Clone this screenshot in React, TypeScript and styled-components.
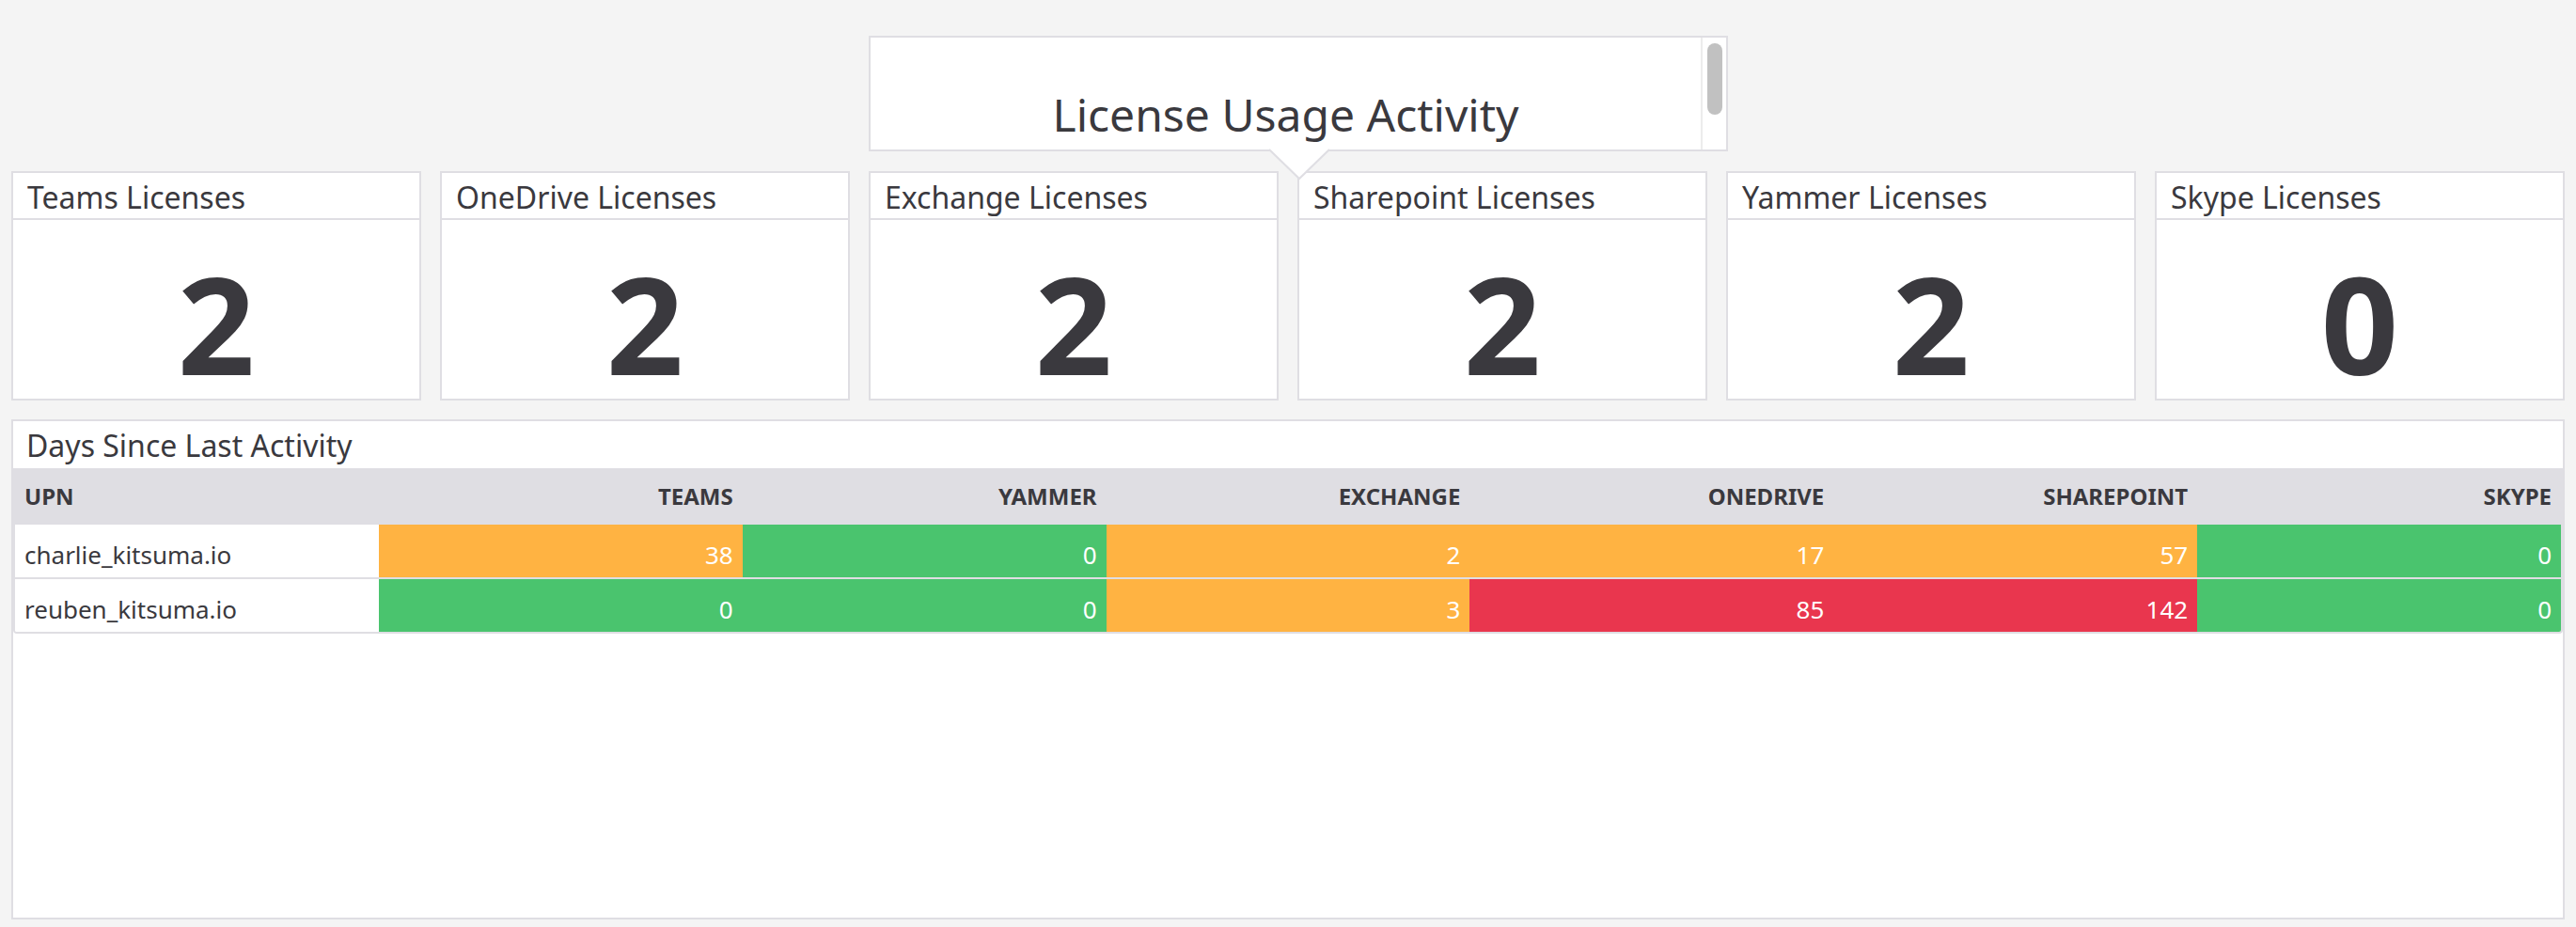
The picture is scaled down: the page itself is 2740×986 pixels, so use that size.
import React from "react";
import styled, { createGlobalStyle } from "styled-components";

const GlobalStyle = createGlobalStyle`
  html, body { margin: 0; padding: 0; background: #f4f4f4; }
  body { font-family: "Noto Sans", "Open Sans", sans-serif; color: #3a393e; }
  * { box-sizing: border-box; }
`;

const Page = styled.div`
  width: 2740px;
  height: 986px;
  padding: 38px 12px 0;
  display: flex;
  flex-direction: column;
  background: #f4f4f4;
`;

const TitleWrap = styled.div`
  position: relative;
  margin-left: 912px;
  width: 914px;
  height: 123px;
  z-index: 2;
`;

const TitleBox = styled.div`
  display: flex;
  height: 100%;
  background: #fff;
  border: 2px solid #dfdee3;
`;

const TitleContent = styled.div`
  flex: 1;
  display: flex;
  align-items: flex-end;
  justify-content: center;
  padding-bottom: 5px;
  font-size: 48px;
  line-height: 64px;
  white-space: nowrap;
`;

const ScrollTrack = styled.div`
  width: 27px;
  border-left: 2px solid #ececec;
  padding: 6px 0 0 5px;
`;

const ScrollThumb = styled.div`
  width: 16px;
  height: 76px;
  border-radius: 8px;
  background: #c1c1c1;
`;

const Pointer = styled.svg`
  position: absolute;
  left: 426px;
  top: 120px;
  width: 64px;
  height: 34px;
  overflow: visible;
  pointer-events: none;
`;

const CardGrid = styled.div`
  display: grid;
  grid-template-columns: repeat(6, 1fr);
  gap: 20px;
  margin-top: 21px;
`;

const Card = styled.div`
  height: 244px;
  background: #fff;
  border: 2px solid #dfdee3;
  display: flex;
  flex-direction: column;
`;

const CardHeader = styled.div`
  height: 50px;
  padding: 4px 0 0 15px;
  line-height: 44px;
  font-size: 32px;
  border-bottom: 2px solid #dfdee3;
  white-space: nowrap;
`;

const CardValue = styled.div`
  flex: 1;
  display: flex;
  align-items: center;
  justify-content: center;
  padding-top: 28px;
  font-family: "Open Sans", "Noto Sans", sans-serif;
  font-size: 144px;
  font-weight: 700;
  line-height: 1;
`;

const Panel = styled.div`
  margin-top: 20px;
  height: 532px;
  background: #fff;
  border: 2px solid #dfdee3;
  display: flex;
  flex-direction: column;
`;

const PanelTitle = styled.div`
  height: 50px;
  line-height: 50px;
  padding: 2px 0 0 14px;
  font-size: 32px;
  line-height: 48px;
`;

const TableFrame = styled.div`
  border: 2px solid #dfdee3;
  border-top: 0;
  border-radius: 0 0 4px 4px;
  overflow: hidden;
`;

const HeaderRow = styled.div`
  display: grid;
  grid-template-columns: repeat(7, 1fr);
  height: 60px;
  background: #dfdee3;
`;

const HeaderCell = styled.div<{ $left?: boolean }>`
  padding: 0 10px;
  font-size: 24px;
  font-weight: 700;
  line-height: 60px;
  text-align: ${(p) => (p.$left ? "left" : "right")};
  white-space: nowrap;
`;

const Row = styled.div`
  display: grid;
  grid-template-columns: repeat(7, 1fr);
  height: 56px;
  & + & {
    height: 58px;
    border-top: 2px solid #dfdee3;
  }
`;

const palette: Record<string, string> = {
  none: "#ffffff",
  green: "#4ac46e",
  orange: "#ffb342",
  red: "#e9364e",
};

const Cell = styled.div<{ $tone: string }>`
  padding: 8px 10px 0;
  font-size: 26px;
  line-height: 48px;
  white-space: nowrap;
  background: ${(p) => palette[p.$tone]};
  color: ${(p) => (p.$tone === "none" ? "#3a393e" : "#ffffff")};
  text-align: ${(p) => (p.$tone === "none" ? "left" : "right")};
`;

const cards = [
  { label: "Teams Licenses", value: 2 },
  { label: "OneDrive Licenses", value: 2 },
  { label: "Exchange Licenses", value: 2 },
  { label: "Sharepoint Licenses", value: 2 },
  { label: "Yammer Licenses", value: 2 },
  { label: "Skype Licenses", value: 0 },
];

const columns = ["UPN", "TEAMS", "YAMMER", "EXCHANGE", "ONEDRIVE", "SHAREPOINT", "SKYPE"];

const tone = (v: number) => (v === 0 ? "green" : v > 60 ? "red" : "orange");

const rows = [
  { upn: "charlie_kitsuma.io", values: [38, 0, 2, 17, 57, 0] },
  { upn: "reuben_kitsuma.io", values: [0, 0, 3, 85, 142, 0] },
];

export default function App() {
  return (
    <>
      <GlobalStyle />
      <Page>
        <TitleWrap>
          <TitleBox>
            <TitleContent>License Usage Activity</TitleContent>
            <ScrollTrack>
              <ScrollThumb />
            </ScrollTrack>
          </TitleBox>
          <Pointer viewBox="0 0 64 34">
            <polygon points="0,1 32,32 64,1" fill="#ffffff" stroke="none" />
            <polyline points="0,1 32,32 64,1" fill="none" stroke="#dfdee3" strokeWidth="2" />
          </Pointer>
        </TitleWrap>
        <CardGrid>
          {cards.map((c) => (
            <Card key={c.label}>
              <CardHeader>{c.label}</CardHeader>
              <CardValue>{c.value}</CardValue>
            </Card>
          ))}
        </CardGrid>
        <Panel>
          <PanelTitle>Days Since Last Activity</PanelTitle>
          <TableFrame>
            <HeaderRow>
              {columns.map((col, i) => (
                <HeaderCell key={col} $left={i === 0}>
                  {col}
                </HeaderCell>
              ))}
            </HeaderRow>
            {rows.map((r) => (
              <Row key={r.upn}>
                <Cell $tone="none">{r.upn}</Cell>
                {r.values.map((v, i) => (
                  <Cell key={i} $tone={tone(v)}>
                    {v}
                  </Cell>
                ))}
              </Row>
            ))}
          </TableFrame>
        </Panel>
      </Page>
    </>
  );
}
